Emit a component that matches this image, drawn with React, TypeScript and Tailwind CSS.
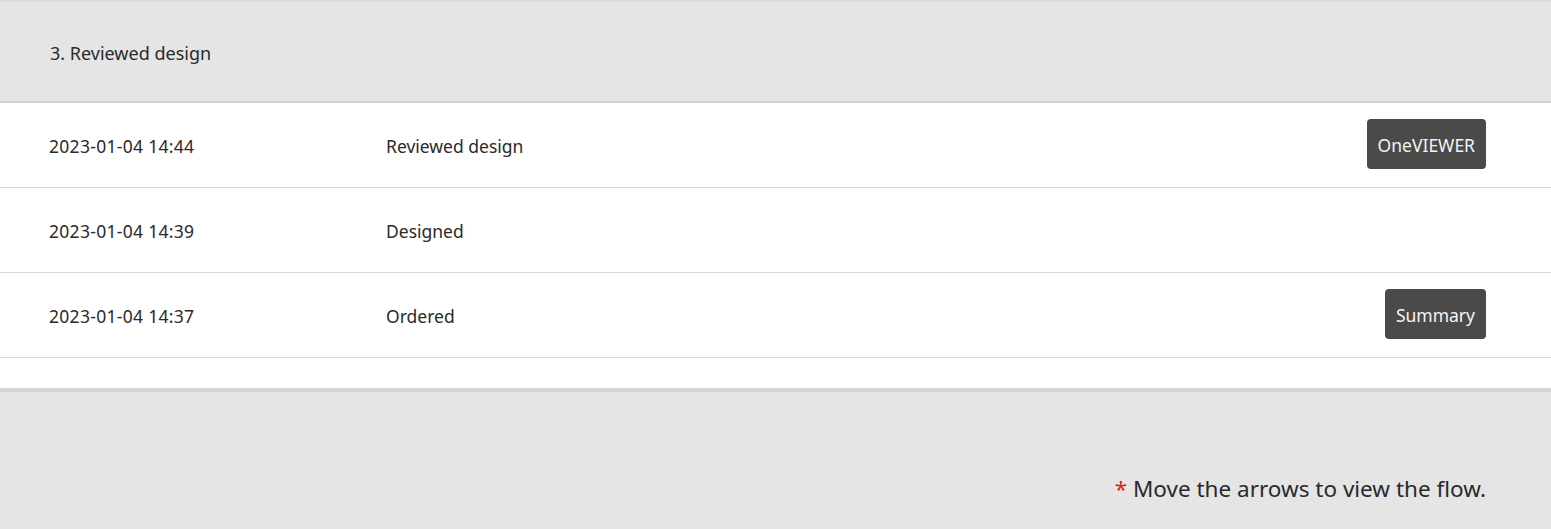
import React from "react";

const rows = [
  { date: "2023-01-04 14:44", label: "Reviewed design", btn: "OneVIEWER" },
  { date: "2023-01-04 14:39", label: "Designed", btn: "" },
  { date: "2023-01-04 14:37", label: "Ordered", btn: "Summary" },
];

export default function App() {
  return (
    <div className="w-[1551px] h-[529px] overflow-hidden bg-white text-[#2a2a2a]" style={{ fontFamily: '"Noto Sans", "Open Sans", sans-serif' }}>
      <div className="border-t-2 border-[#d9d9d9] border-b-2 border-b-[#d2d2d2] bg-[#e5e5e5] h-[103px] flex items-center pl-[50px] text-[18px] pt-[4px]">
        3. Reviewed design
      </div>
      {rows.map((r) => (
        <div key={r.date} className="h-[85px] border-b border-[#d9d9d9] flex items-center pl-[49px] pr-[65px] text-[17.5px]">
          <div className="w-[337px] pt-[2px] tracking-[0.3px]">{r.date}</div>
          <div className="flex-1 pt-[2px]">{r.label}</div>
          {r.btn && (
            <button className="h-[50px] px-[11px] pt-[3px] bg-[#4a4a4a] text-[#f4f4f4] rounded-[4px] text-[17.5px] -mt-[2px]">
              {r.btn}
            </button>
          )}
        </div>
      ))}
      <div className="h-[30px]" />
      <div className="border-t-4 border-[#d4d4d4] bg-[#e5e5e5] h-[200px] flex justify-end pr-[65px] pt-[82px]">
        <div className="text-[22.5px] leading-[30px]">
          <span className="text-[#e02020]">*</span> Move the arrows to view the flow.
        </div>
      </div>
    </div>
  );
}
